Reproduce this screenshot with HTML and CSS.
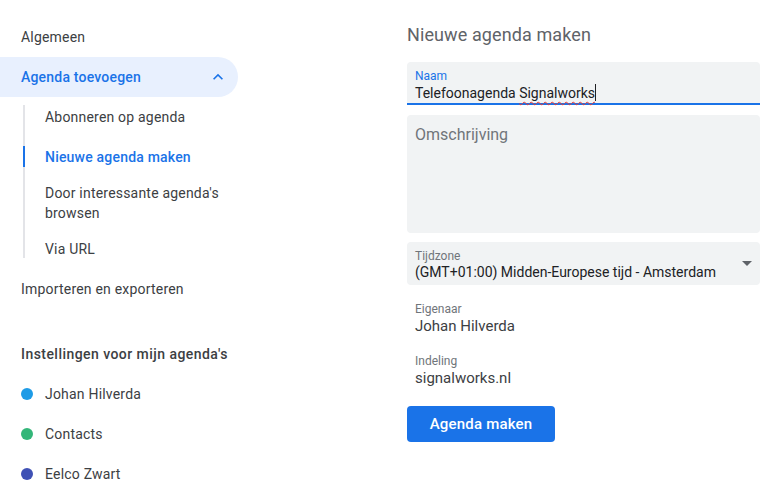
FILE: index.html
```html
<!DOCTYPE html>
<html lang="nl">
<head>
<meta charset="utf-8">
<title>Nieuwe agenda maken</title>
<link rel="stylesheet" href="styles.css">
</head>
<body>
<div class="page">
  <nav class="sidebar">
    <div class="nav-item">Algemeen</div>
    <div class="nav-item nav-open">
      <span>Agenda toevoegen</span>
      <svg class="chev" width="20" height="20" viewBox="0 0 24 24"><path d="M12 8l-6 6 1.41 1.41L12 10.83l4.59 4.58L18 14z" fill="#1a73e8"/></svg>
    </div>
    <ul class="sub">
      <li class="sub-item">Abonneren op agenda</li>
      <li class="sub-item sub-active">Nieuwe agenda maken</li>
      <li class="sub-item sub-multi">Door interessante agenda's browsen</li>
      <li class="sub-item">Via URL</li>
    </ul>
    <div class="nav-item">Importeren en exporteren</div>
    <div class="nav-heading">Instellingen voor mijn agenda's</div>
    <div class="cal"><span class="dot dot-blue"></span>Johan Hilverda</div>
    <div class="cal"><span class="dot dot-green"></span>Contacts</div>
    <div class="cal"><span class="dot dot-indigo"></span>Eelco Zwart</div>
  </nav>
  <main class="main">
    <h1 class="title">Nieuwe agenda maken</h1>
    <div class="field field-focus">
      <div class="label label-blue">Naam</div>
      <div class="value">Telefoonagenda <span class="typo">Signalworks</span><span class="caret"></span></div>
    </div>
    <div class="field area">
      <div class="placeholder">Omschrijving</div>
    </div>
    <div class="field select">
      <div>
        <div class="label">Tijdzone</div>
        <div class="value value-tz">(GMT+01:00) Midden-Europese tijd - Amsterdam</div>
      </div>
      <svg class="drop" width="10" height="5" viewBox="0 0 10 5"><path d="M0 0l5 5 5-5z" fill="#5f6368"/></svg>
    </div>
    <div class="info">
      <div class="label">Eigenaar</div>
      <div class="info-value">Johan Hilverda</div>
    </div>
    <div class="info info-2">
      <div class="label">Indeling</div>
      <div class="info-value">signalworks.nl</div>
    </div>
    <button class="btn">Agenda maken</button>
  </main>
</div>
</body>
</html>
```
FILE: styles.css
```css
* { box-sizing: border-box; }
html, body { margin: 0; padding: 0; background: #fff; }
body {
  font-family: Roboto, "Liberation Sans", Arial, sans-serif;
  color: #3c4043;
  font-size: 14px;
  overflow: hidden;
}
.page { display: flex; height: 493px; }
.sidebar { width: 260px; flex: none; padding-top: 17px; letter-spacing: 0.2px; }
.nav-item {
  height: 40px;
  display: flex;
  align-items: center;
  padding-left: 21px;
  font-size: 14px;
  color: #3c4043;
}
.nav-open {
  width: 238px;
  background: #e8f0fe;
  border-radius: 0 20px 20px 0;
  color: #1a73e8;
  font-weight: 500;
  justify-content: space-between;
  padding-right: 10px;
}
.chev { display: block; }
.sub { list-style: none; margin: 0; padding: 0; position: relative; }
.sub::before {
  content: "";
  position: absolute;
  left: 23px; top: 8px; bottom: 11px;
  width: 2px;
  background: #e3e4e8;
}
.sub-item {
  position: relative;
  height: 40px;
  display: flex;
  align-items: center;
  padding-left: 45px;
  padding-right: 40px;
  line-height: 20px;
}
.sub-multi { height: 52px; }
.sub-active { color: #1a73e8; font-weight: 500; }
.sub-active::before {
  content: "";
  position: absolute;
  left: 23px; top: 9px;
  width: 2px; height: 21px;
  background: #1a73e8;
}
.nav-heading {
  margin-top: 25px;
  height: 40px;
  display: flex;
  align-items: center;
  padding-left: 21px;
  font-weight: 500;
  letter-spacing: 0.45px;
}
.cal {
  height: 40px;
  display: flex;
  align-items: center;
  padding-left: 21px;
  gap: 12px;
}
.dot { width: 12px; height: 12px; border-radius: 50%; flex: none; }
.dot-blue { background: #1e9be6; }
.dot-green { background: #33b679; }
.dot-indigo { background: #3f51b5; }

.main { padding-left: 147px; padding-top: 23px; width: 500px; flex: none; }
.title {
  margin: 0 0 15px;
  font-size: 18px;
  line-height: 24px;
  font-weight: 400;
  color: #5f6368;
  letter-spacing: 0.1px;
}
.field {
  width: 353px;
  background: #f1f3f4;
  border-radius: 4px;
  padding: 6px 8px 0;
}
.field-focus {
  border-radius: 4px 4px 0 0;
  border-bottom: 2px solid #1a73e8;
}
.label { font-size: 12px; line-height: 16px; color: #70757a; }
.label-blue { color: #1a73e8; }
.value { font-size: 14px; line-height: 19px; color: #202124; }
.typo {
  text-decoration: underline wavy #e53935;
  text-decoration-thickness: 1px;
  text-underline-offset: 3px;
}
.caret {
  display: inline-block;
  width: 1px; height: 17px;
  background: #202124;
  vertical-align: -3px;
}
.area { margin-top: 10px; height: 118px; padding-top: 10px; }
.placeholder { font-size: 16px; line-height: 20px; color: #70757a; }
.select {
  margin-top: 9px;
  height: 43px;
  display: flex;
  align-items: center;
  justify-content: space-between;
  padding: 0 8px;
}
.value-tz { line-height: 16px; font-size: 14px; }
.drop { display: block; }
.info { padding-left: 8px; margin-top: 16px; }
.info-2 { margin-top: 18px; }
.info-value { font-size: 15px; line-height: 18px; color: #3c4043; }
.btn {
  margin-top: 19px;
  width: 148px;
  height: 36px;
  border: 0;
  border-radius: 4px;
  background: #1a73e8;
  color: #fff;
  font-family: Roboto, "Liberation Sans", Arial, sans-serif;
  font-size: 15px;
  font-weight: 500;
  letter-spacing: 0.2px;
  padding: 0;
}
```
